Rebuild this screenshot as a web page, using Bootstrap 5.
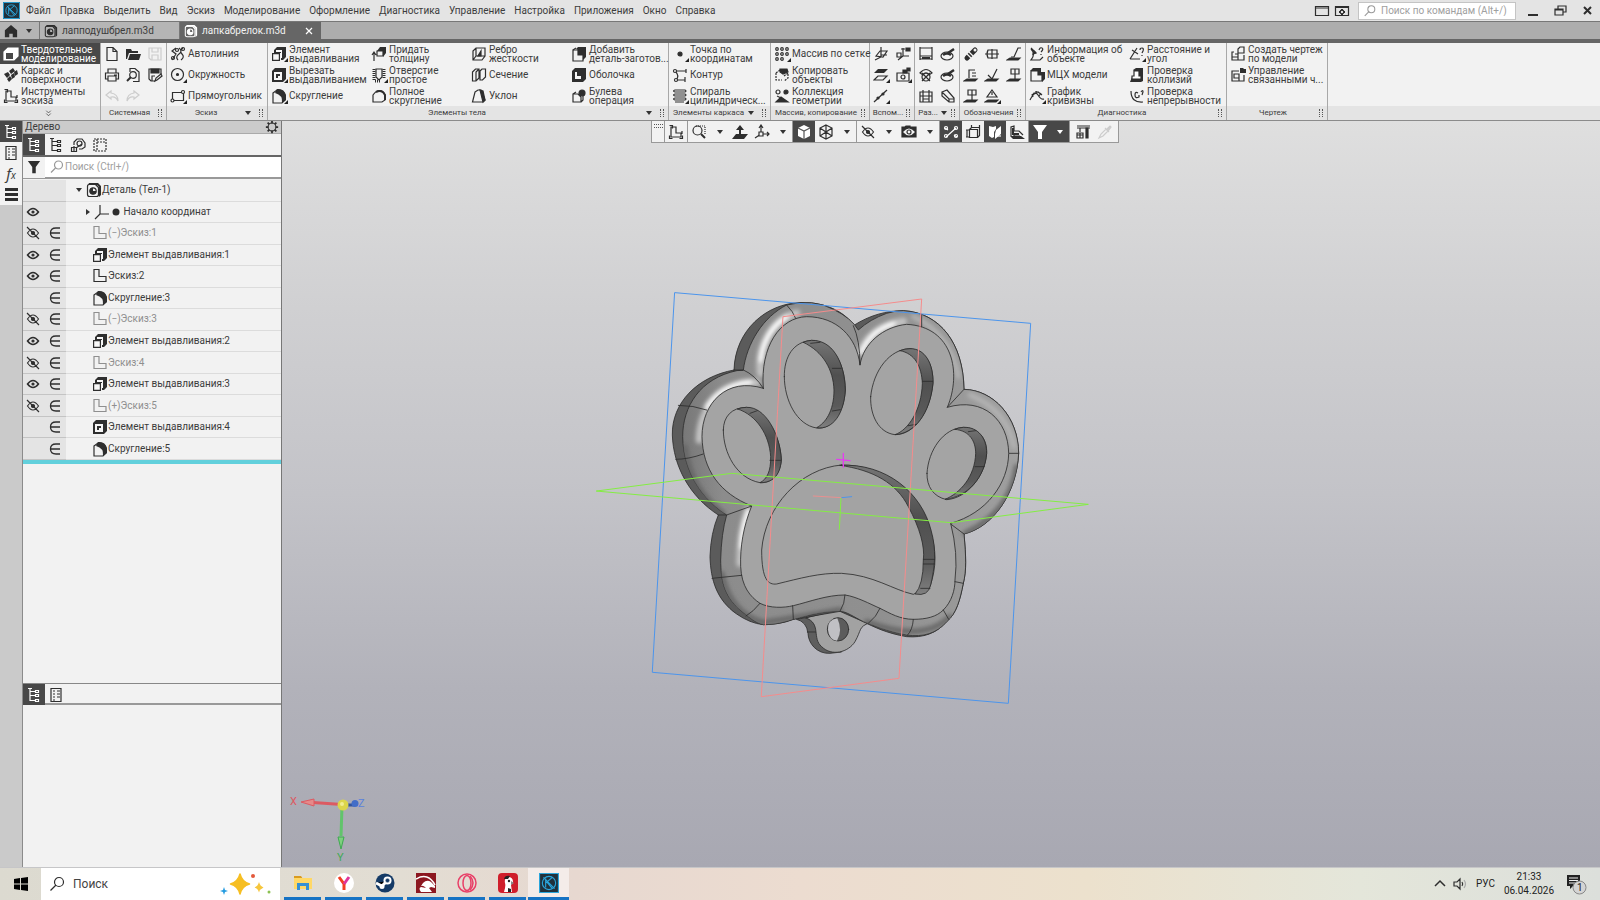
<!DOCTYPE html>
<html lang="ru">
<head>
<meta charset="utf-8">
<meta name="viewport" content="width=device-width, initial-scale=1">
<title>лапкабрелок.m3d</title>
<link href="https://cdn.jsdelivr.net/npm/bootstrap@5.3.0/dist/css/bootstrap.min.css" rel="stylesheet">
<style>
:root{--ink:#2e2e2e;--dark:#484848;--edge:#8b8b8b}
body{font-family:Roboto,"Noto Sans",sans-serif;font-size:10px;line-height:14px;color:#3c3c3c;background:#ccc}
button,input{font:inherit;color:inherit}
button{border:0;background:none;padding:0}
a{color:inherit;text-decoration:none}
svg{display:block;flex:none}
.ic{width:16px;height:16px;fill:none;stroke:currentColor;stroke-width:1.2;color:var(--ink)}
.ic.mid{width:14px;height:14px}
.ic.pale{color:#ccc}.ic.grey{color:#999}
.f{fill:currentColor}
.menubar{height:21px;background:#e4e4e4;padding-left:3px}
.menubar nav{gap:9px;padding-left:6px}
.cmdsearch{width:158px;height:18px;border:1px solid #c4c4c4;background:#fff}
.cmdsearch input,.treesearch input{border:0;outline:0;background:none;min-width:0;padding:0}
input::placeholder{color:#a0a0a0;opacity:1}
.tabbar{height:22px;background:#adadad;border-top:1px solid #777;border-bottom:4px solid #666}
.tabbar>*{border-right:1px solid #777;background:#b5b5b5}
.tab-home{width:40px}
.tab-doc{width:140px}
.tab-doc.on{width:141px;background:#666;color:#f2f2f2;border:0;margin-bottom:-4px;padding-bottom:3px}
.ribbon{height:78px;background:linear-gradient(#f2f2f2 63px,#e4e4e4 63px);border-bottom:1px solid var(--edge)}
.grp{border-right:1px solid #a8a8a8;flex:none}
.cells{display:grid;grid-template-rows:repeat(3,21px);grid-auto-flow:column;grid-auto-columns:100px}
.cells.wide{grid-auto-columns:101px}
.cells.slim{grid-auto-columns:98px}
.cells.duo{grid-auto-columns:22px}
.cells.trio{grid-template-columns:21px 22px 22px}
.cells button{display:flex;align-items:center;gap:2px;padding-left:3px;text-align:left;line-height:9px;white-space:nowrap;height:21px;position:relative}
.cells .dd::after{content:"";position:absolute;left:16px;bottom:2px;border:2px solid transparent;border-right-color:#222;border-bottom-color:#222}
.grp.modes .on{background:var(--dark);color:#fff}
.caption{width:0;min-width:100%;height:14px;font-size:8px;line-height:14px;display:flex;align-items:center;padding-right:4px}
.caption span{flex:1;text-align:center;white-space:nowrap}
.grip{width:4px;height:8px;border-left:1px dotted #555;border-right:1px dotted #555}
.gripbar{width:9px;height:4px;border-top:1px dotted #555;border-bottom:1px dotted #555}
.car{border:3px solid transparent;border-top:4px solid #333;border-bottom:0;width:0;height:0;flex:none}
.car.side{border:3px solid transparent;border-left:4px solid #333;border-right:0}
.car.lite{border-top-color:#fff}
.rail{width:22px;background:#cacaca}
.rail button{width:22px;height:21px;background:#f2f2f2;display:grid;place-items:center}
.rail .on,.sq.on{background:var(--dark)}
.on .ic{color:#fff}
.fx{font-family:"Noto Sans",sans-serif;font-size:15px;font-style:italic}
.fx small{font-size:10px}
.tree{width:260px;background:#f2f2f2;border-left:1px solid var(--edge);border-right:1px solid #777}
.tree-head{height:13px;background:#cbcbcb;border-bottom:1px solid #aaa;padding:0 2px}
.sq{width:22px;height:21px;display:grid;place-items:center}
.treesearch{height:24px;background:#fff;border-top:2px solid #666;border-bottom:2px solid #999}
.treesearch .sq{background:#f2f2f2}
.rows{height:285px;border-bottom:4px solid #62d0dc;list-style:none;margin:0;padding:1px 0 0}
.rows li{flex:1 1 0;display:flex;align-items:center;border-bottom:1px solid #dcdcdc;min-height:0}
.rows .flags{width:43px;align-self:stretch;background:#e4e4e4;display:grid;grid-template-columns:22px 21px;align-items:center;border-bottom:1px solid #c4c4c4;margin-bottom:-1px}
.rows .flags .ic{margin-left:2px}
.rows .own{grid-column:2}
.rows .name{padding-left:26px;display:flex;align-items:center;white-space:nowrap}
.rows .name.top{padding-left:10px}.rows .name.sub{padding-left:20px}
.rows .dim,.rows .dim .ic{color:#8f8f8f}
.subbar{height:22px;border-top:1px solid #888;border-bottom:2px solid #999}
.lower{height:162px}
.view{background:linear-gradient(#dfdfdf,#d0d0d2 25%,#c3c3c8 50%,#b2b2ba 76%,#a8a8b2);position:relative}
.view .scene{position:absolute;inset:0;width:100%;height:100%}
.quick{position:absolute;left:369px;top:0;height:22px;background:#f2f2f2;border:1px solid #999;border-top:0}
.quick>div{display:flex;align-items:center;border-right:1px solid #999;height:21px}
.quick>div:last-child{border:0;padding:0 2px}
.quick .cr{width:19px;height:21px;display:grid;place-items:center}
.quick .hand{width:13px;align-items:start;justify-content:center;padding-top:3px}
.quick .nar{width:18px}
.taskbar{height:33px;background:linear-gradient(90deg,#dcdad0,#e2ddd3 25%,#e7d8d0 36%,#ecdcd0 50%,#ece1cd 68%,#e4e6da 85%,#dcdfdb);border-top:1px solid #c6c6c8;color:#222}
.start{width:41px;display:grid;place-items:center}
.find{width:239px;background:#fff;font-size:12px}
.find input{border:0;outline:0;background:none;min-width:0;padding:0}
.find input::placeholder{color:#444}
.app{width:37px;height:32px;border-bottom:3px solid #1673c4;display:grid;place-items:center}
.apps{gap:4px;padding-left:4px}
.app.on{background:#f4ece9;width:41px;margin-left:-2px}
.clock{width:52px}
.systray{padding-right:11px}
</style>
</head>
<body class="vh-100 d-flex flex-column overflow-hidden">

<svg width="0" height="0" class="position-absolute" aria-hidden="true">
<symbol id="part" viewBox="0 0 16 16"><path class="f" stroke="none" d="M3 1h9l3 3v9l-2 2V5l-2-2H2z"/><path d="M1.500 4.500q0-2 2-2h6l3 3v7q0 2-2 2h-7q-2 0-2-2z"/><circle cx="7" cy="9" r="3.200"/><path class="f" stroke="none" d="M7 9V5.800A3.200 3.200 0 1 0 10.200 9z"/></symbol>
<symbol id="cube" viewBox="0 0 16 16"><path class="f" d="M1 6l4-4h10v8l-4 4H1z"/><path fill="#484848" stroke="none" d="M3 7h7v6H3z"/></symbol>
<symbol id="mesh" viewBox="0 0 16 16"><path class="f" stroke="none" d="M1 7l4-2 2 3-3 3zM6 4l4-3 2 3-4 3zM11 5l3-2 1 4-3 2zM8 8l3-2 1 4-3 2zM4 12l3-3 2 3-3 3z"/></symbol>
<symbol id="sketch" viewBox="0 0 16 16"><path d="M3 3v10h10V9H8V3zM1.500 1.500h3v3M1.500 11.500v3h3M11.500 14.500h3v-3M14 7v3"/></symbol>
<symbol id="ell" viewBox="0 0 16 16"><path d="M2 1.500h5v7h7v5H2z"/></symbol>
<symbol id="doc" viewBox="0 0 16 16"><path d="M3 1.500h6l4 4v9H3zM9 1.500v4h4"/></symbol>
<symbol id="open" viewBox="0 0 16 16"><path class="f" stroke="none" d="M1 3h5l1 2h6v2H4l-2 6H1zM5 8h11l-2 6H3z"/></symbol>
<symbol id="save" viewBox="0 0 16 16"><path d="M2 2h12v12H4l-2-2zM5 2v4h6V2M5 14v-5h6v5"/></symbol>
<symbol id="saveas" viewBox="0 0 16 16"><path d="M8 14H4l-2-2V2h12v5"/><path class="f" d="M4 2h8v4H4z"/><path d="M5 14v-5h3M8 14l1-3 5-4 1 2-5 4z"/></symbol>
<symbol id="print" viewBox="0 0 16 16"><path d="M4 6V2h8v4M4 12H1.500V6h13v6H12M4 9h8v5H4zM10 8h3"/></symbol>
<symbol id="preview" viewBox="0 0 16 16"><path d="M5 5V1.500h5L14 5v9.500H8"/><circle cx="8" cy="8" r="3.300"/><path stroke-width="2" d="M6 10l-4 4"/></symbol>
<symbol id="objs" viewBox="0 0 16 16"><path d="M4 8V5l3-3h5l3 4v4l-3 2H9"/><circle cx="9.500" cy="6.500" r="2.500"/><path d="M1.500 10.500h5v4h-5zM4 9v5M6 11l6-4"/></symbol>
<symbol id="undo" viewBox="0 0 16 16"><path d="M7 3L2 7l5 4V9q5-1 7 4 0-7-7-8z"/></symbol>
<symbol id="redo" viewBox="0 0 16 16"><path d="M9 3l5 4-5 4V9Q4 8 2 13 2 6 9 5z"/></symbol>
<symbol id="auto" viewBox="0 0 16 16"><path d="M2 14L6 8 2 5l4-3M8 14q-3-3 1-6t0-6M13 2q-4 3-1 6t-1 6"/><circle cx="13" cy="3" r="1.500"/><circle cx="3" cy="12" r="1.500"/><circle cx="7" cy="4" r="1.500"/></symbol>
<symbol id="circ" viewBox="0 0 16 16"><circle cx="7.500" cy="7.500" r="6"/><circle class="f" cx="7.500" cy="7.500" r="1"/></symbol>
<symbol id="rect" viewBox="0 0 16 16"><path d="M2.500 4.500h11v8h-11z"/><g fill="#fff"><circle cx="13" cy="4" r="1.500"/><circle cx="2.500" cy="12.500" r="1.500"/></g></symbol>
<symbol id="ext" viewBox="0 0 16 16"><path class="f" stroke="none" d="M3 4l3-3h9v10l-3 3h-2V7H3z"/><path fill="#f8f8f8" stroke="none" d="M5 4h6v8h-1V6H5z"/><path fill="#f8f8f8" d="M1.600 7.600h6.800v6.800H1.600z"/></symbol>
<symbol id="cut" viewBox="0 0 16 16"><path class="f" stroke="none" d="M1 4l3-3h11v11l-3 3H1z"/><path fill="#f6f6f6" stroke="none" d="M3 5h8v8H3z"/><path fill="none" stroke-width="2" d="M6 11V8h3"/></symbol>
<symbol id="fillet" viewBox="0 0 16 16"><path d="M2 5l4-3h3q5 2 5 6v4l-3 3H2z"/><path class="f" stroke="none" d="M6 1q7-1 9 6v5l-4 3q1-8-7-10z"/></symbol>
<symbol id="thick" viewBox="0 0 16 16"><path class="f" stroke="none" d="M6 5l3-4h6v6l-3 4V5z"/><path d="M6 5h6v5H6zM3 15V7M1 9l2-3 2 3"/></symbol>
<symbol id="hole" viewBox="0 0 16 16"><path stroke-dasharray="1 1" stroke-width="3" d="M3 2v12M13 2v10M4 14h6"/><path d="M5 2v8l3 3 3-3V2z"/></symbol>
<symbol id="fullf" viewBox="0 0 16 16"><path d="M2 7q4-6 9-4 4 2 3 9l-3 2H2z"/><path stroke-width="2" d="M5 4q6-3 9 3v5"/></symbol>
<symbol id="rib" viewBox="0 0 16 16"><path d="M2 5l3-3h9v8l-3 4H2zM5 2v8h9M5 10l-3 4"/><path class="f" d="M10 5v5H7z"/></symbol>
<symbol id="sect" viewBox="0 0 16 16"><path d="M1.500 5l3-3H8v9l-3 3H1.500zM5 14V5l3-3M9 4l2-2h3.500v8l-3 3H9z"/></symbol>
<symbol id="draft" viewBox="0 0 16 16"><path d="M4 4l3-2h3l4 10-2 2H1.500z"/><path class="f" d="M9 2l3 1 2 9-2 2z"/></symbol>
<symbol id="addp" viewBox="0 0 16 16"><path class="f" stroke="none" d="M5 3l2-2h8v10l-3 3V9H7V4z"/><path d="M2 4h5v5h5v6H2z"/><path d="M2 4l3-2"/></symbol>
<symbol id="shell" viewBox="0 0 16 16"><path class="f" stroke="none" d="M1 4l3-3h11v11l-3 3H1z"/><path fill="#f6f6f6" stroke="none" d="M4 5h6v7H4z"/><path class="f" stroke="none" d="M6 5h4v4H6z"/></symbol>
<symbol id="bool" viewBox="0 0 16 16"><path d="M2 6h5l3 3v5H2zM12 8v4l-2 2M2 6l3-2"/><circle class="f" cx="11" cy="5" r="3"/></symbol>
<symbol id="dot" viewBox="0 0 16 16"><circle class="f" cx="8" cy="8" r="2"/></symbol>
<symbol id="contour" viewBox="0 0 16 16"><path d="M14 4H3q5 5 1 9h9M14 2v4M13 10v5"/><g fill="#fff"><circle cx="3" cy="4" r="1.500"/><circle cx="4" cy="13" r="1.500"/></g></symbol>
<symbol id="spiral" viewBox="0 0 16 16"><path d="M3 4q-3-1 0-2h10q2 1 0 2zM3 8q-3-1 0-2h10q2 1 0 2zM3 12q-3-1 0-2h10q2 1 0 2zM3 14h9"/></symbol>
<symbol id="array" viewBox="0 0 16 16"><circle cx="3" cy="3" r="1.300"/><circle cx="8" cy="3" r="1.300"/><circle cx="13" cy="3" r="1.300"/><circle cx="3" cy="8" r="1.300"/><circle cx="8" cy="8" r="1.300"/><circle cx="13" cy="8" r="1.300"/><circle cx="3" cy="13" r="1.300"/><circle cx="8" cy="13" r="1.300"/></symbol>
<symbol id="copy" viewBox="0 0 16 16"><path stroke-dasharray="2 1" d="M2 6l4-3M2 6v7h6M10 9l4-3v5l-4 3"/><path class="f" d="M6 2h7l1 3-5 2-3-2z"/></symbol>
<symbol id="coll" viewBox="0 0 16 16"><circle cx="4" cy="4" r="2"/><circle class="f" cx="12" cy="4" r="2"/><path class="f" d="M2 14l5-5 7 5z"/><path d="M3 8l4 2"/></symbol>
<symbol id="plane" viewBox="0 0 16 16"><path d="M3 10l4-5h7l-4 6zM8 1v10l-6 3M8 9h6"/></symbol>
<symbol id="lcs" viewBox="0 0 16 16"><path d="M8 2v8h6M8 10l-5 4M2 7h4v4H2zM6 3h4"/><path class="f" d="M11 2h4v3h-4z"/></symbol>
<symbol id="planes" viewBox="0 0 16 16"><path class="f" stroke="none" d="M1 6l4-4h10l-4 4z"/><path d="M1 13l4-4h9l-4 4z"/></symbol>
<symbol id="cam" viewBox="0 0 16 16"><path d="M2 6h12v8H2z"/><circle cx="8" cy="10" r="2"/><path class="f" d="M8 3h4v3H8zM12 1h3v3h-3z"/></symbol>
<symbol id="axis" viewBox="0 0 16 16"><path d="M1 14L14 2"/><circle class="f" cx="5" cy="10" r="1"/><circle class="f" cx="10" cy="6" r="1"/></symbol>
<symbol id="dim" viewBox="0 0 16 16"><path d="M2 1v13M14 1v13M2 2h12v8H2M2 13h12"/><path stroke-width="2" d="M4 12h8"/></symbol>
<symbol id="disc" viewBox="0 0 16 16"><ellipse cx="7" cy="10" rx="6" ry="4"/><path stroke-width="2.500" d="M3 9q4-3 8 0M8 7l6-4"/></symbol>
<symbol id="rad" viewBox="0 0 16 16"><path d="M2 6q6-7 12 0l-3 2q-3-4-6 0z"/><circle cx="8" cy="10" r="4"/><path d="M4 14l8-8M4 6l8 8"/></symbol>
<symbol id="grid3" viewBox="0 0 16 16"><path d="M2 4h12v10H2zM5 2v12M11 2v12M2 8h12M5 11h6"/></symbol>
<symbol id="prism" viewBox="0 0 16 16"><path d="M2 4l5-2 7 8v4H9L2 8zM2 4l7 7h5M9 11v3"/></symbol>
<symbol id="thread" viewBox="0 0 16 16"><path stroke-width="5" stroke-linecap="round" d="M4 12l8-8"/><path stroke="#f2f2f2" d="M4 8l4 4M6 6l4 4"/><circle cx="12" cy="4" r="1.500" fill="#f2f2f2" stroke="none"/></symbol>
<symbol id="axc" viewBox="0 0 16 16"><path d="M4 4h9v8H4q-2-4 0-8zM1 8h14M8 3v10"/></symbol>
<symbol id="rough" viewBox="0 0 16 16"><path d="M4 8l4 4 5-10"/><path class="f" d="M1 14l3-2h10l-2 2z"/></symbol>
<symbol id="base" viewBox="0 0 16 16"><path d="M6 11V3h6M9 6h4M9 9h4"/><path class="f" d="M1 14l3-2h10l-2 2z"/></symbol>
<symbol id="lead" viewBox="0 0 16 16"><path d="M5 11h3l4-9h3"/><path class="f" d="M1 14l3-2h10l-2 2z"/></symbol>
<symbol id="note" viewBox="0 0 16 16"><path d="M5 2h8v5H5zM9 2v10"/><path class="f" d="M1 14l3-2h10l-2 2z"/></symbol>
<symbol id="warn" viewBox="0 0 16 16"><path d="M8 2l5 7H3zM8 4v3"/><path class="f" d="M1 14l3-2h10l-2 2z"/></symbol>
<symbol id="info" viewBox="0 0 16 16"><path d="M2 3q5 5 0 11h9l3-3M10 4q1-3 3-2t-1 4M12 8v1M2 2l5 5"/><path class="f" d="M5 5l2 2-3 1z"/></symbol>
<symbol id="mass" viewBox="0 0 16 16"><path class="f" stroke="none" d="M1 4l3-3h8v4h4v7l-3 3V8H9V4z"/><path d="M2 4h7v4h4v6H2z"/></symbol>
<symbol id="curv" viewBox="0 0 16 16"><path d="M1 12q5-10 8-5t6 4M3 8l2-3 4-1 4 3M4 9L3 6M7 6V3M10 8l2-3"/></symbol>
<symbol id="dist" viewBox="0 0 16 16"><path d="M1 13L8 2M1 13h10M3 4l6 4M11 4q0-2 2-2t1 3l-1 2M13 9v1"/></symbol>
<symbol id="colli" viewBox="0 0 16 16"><path class="f" stroke="none" d="M4 3l3-2h7v13l-2 1H1l2-5h2V4z"/><path fill="#fff" d="M5 4h5v5h2v3H3V9h2z"/></symbol>
<symbol id="cont" viewBox="0 0 16 16"><path d="M2 3q0 12 12 11M9 5Q6 3 6 7t4 2V7M12 4q2-3 2 0l-1 3"/></symbol>
<symbol id="draw" viewBox="0 0 16 16"><path d="M4 6H2v8h12V9M2 11h6v3M5 8h3v3M8 7V3l2-2h4v6H8z"/></symbol>
<symbol id="links" viewBox="0 0 16 16"><path d="M9 4H2v10h12V8M4 7h5v4H4zM9 11v3"/><path class="f" stroke="none" d="M10 1h3l1 1h2v4h-6z"/></symbol>
<symbol id="tree" viewBox="0 0 16 16"><path d="M4 1v13M4 4.500h5M4 8.500h5M4 13.500h5M2 1.500h4M9.500 3.500h3v2h-3zM9.500 7.500h3v2h-3zM9.500 12.500h3v2h-3z"/></symbol>
<symbol id="list" viewBox="0 0 16 16"><path d="M3 1.500h10v13H3zM5 4h2M9 4h3M5 7h2M9 7h3M5 10h2M9 10h3M5 13h2"/></symbol>
<symbol id="bars" viewBox="0 0 16 16"><path class="f" stroke="none" d="M2 1h13v3H2zM2 6h13v3H2zM2 11h13v3H2z"/></symbol>
<symbol id="gear" viewBox="0 0 16 16"><circle cx="8" cy="8" r="4.500"/><path stroke-width="2" d="M8 1v3M8 12v3M1 8h3M12 8h3M3 3l2 2M11 11l2 2M13 3l-2 2M5 11l-2 2"/></symbol>
<symbol id="zones" viewBox="0 0 16 16"><path stroke-dasharray="2 1" d="M2 2h12v12H2zM5 2v12M5 5h9"/></symbol>
<symbol id="funnel" viewBox="0 0 16 16"><path class="f" stroke="none" d="M1 1h14L10 8v7H6V8z"/></symbol>
<symbol id="mag" viewBox="0 0 16 16"><circle cx="9.500" cy="6" r="4"/><path d="M6.500 9L2 13.500"/></symbol>
<symbol id="eye" viewBox="0 0 16 16"><path stroke-width="1.500" d="M2.500 8q5.500-7 11 0-5.500 7-11 0z"/><circle class="f" cx="8" cy="8" r="1"/></symbol>
<symbol id="eyeoff" viewBox="0 0 16 16"><path d="M2.500 8q5.500-8 11 0-5.500 8-11 0zM2 2l12 12"/><circle class="f" cx="8" cy="8" r="1.500"/></symbol>
<symbol id="in" viewBox="0 0 16 16"><path stroke-width="1.300" d="M13 3H9q-5.500 0-5.500 5t5.500 5h4M4 8h9"/></symbol>
<symbol id="csys" viewBox="0 0 16 16"><path d="M6 1v9h9M6 10l-5 5"/></symbol>
<symbol id="home" viewBox="0 0 16 16"><path class="f" stroke="none" d="M1 7l7-6 7 6v8h-5v-4H6v4H1z"/></symbol>
<symbol id="win" viewBox="0 0 16 16"><path d="M1.500 3.500h13v9h-13zM1.500 5h13"/></symbol>
<symbol id="wineye" viewBox="0 0 16 16"><path d="M1.500 3.500h13v9h-13z"/><path stroke-width="2" d="M1.500 4h13M8 6v6M5 9h6"/><circle cx="8" cy="9" r="1.800" fill="#e4e4e4"/></symbol>
<symbol id="box" viewBox="0 0 16 16"><path d="M8 1l6 3v8l-6 3-6-3V4z" fill="#fff" stroke="none"/><path stroke="#555" d="M2 4l6 3 6-3M8 7v8"/></symbol>
<symbol id="wire" viewBox="0 0 16 16"><path d="M8 1l6 3v8l-6 3-6-3V4zM2 4l6 4 6-4M8 8v7M8 1v7l-6 4M8 8l6 4"/></symbol>
<symbol id="zoomer" viewBox="0 0 16 16"><circle cx="6.500" cy="6.500" r="4.500"/><path stroke-width="2" d="M10 10l4 4"/><path stroke-dasharray="1 1" d="M5 2h9v8"/></symbol>
<symbol id="normal" viewBox="0 0 16 16"><path class="f" stroke="none" d="M0 15l4-5h3V6H4l4-5 4 5H9v4h7l-4 5z"/></symbol>
<symbol id="orient" viewBox="0 0 16 16"><path d="M7 10V2M7 10h8M7 10l-6 4M5 4l2-3 2 3M13 8l2 2-2 2"/><path fill="#f2f2f2" d="M5 8h4v4H5z"/></symbol>
<symbol id="cameye" viewBox="0 0 16 16"><path class="f" d="M1 3h3l1-1h4v1h6v10H1z"/><path fill="#f2f2f2" stroke="none" d="M2 8q6-7 12 0-6 7-12 0z"/><circle cx="8" cy="8" r="2"/></symbol>
<symbol id="constr" viewBox="0 0 16 16"><path d="M3 13l10-9M2 4l3 2M11 11l3 2"/><circle cx="3" cy="4" r="1.500"/><circle cx="13" cy="4" r="1.500"/><circle cx="13" cy="12" r="1.500"/><circle cx="3" cy="12" r="1.500"/></symbol>
<symbol id="planar" viewBox="0 0 16 16"><path d="M4.500 5.500h8v8h-8zM4.500 5.500l2-2h8v8l-2 2M1 6h3M1 13h3M2 6v7M6.500 1v3M14.500 1v3"/></symbol>
<symbol id="shade" viewBox="0 0 16 16"><path class="f" stroke="none" d="M2 2l4 1 3-1v3L7 8v5l-2 1-3-2zM9 6l5-4v8l-6 5v-5z"/><path d="M10 12h4"/></symbol>
<symbol id="layers" viewBox="0 0 16 16"><path class="f" stroke="none" d="M1 12h11l4 3H4z"/><path d="M2 12V3l3-1v5h5l4 4M5 9v3h6"/><path stroke-width="2" d="M4 4v6h6"/></symbol>
<symbol id="caliper" viewBox="0 0 16 16"><path d="M2 2h13M2 4h13M5 4v4M2 9h6v5H2zM5 9v5M2 11h6"/><path class="f" d="M11 4h2v10h-2z"/></symbol>
<symbol id="pipette" viewBox="0 0 16 16"><path d="M2 14l2-4 5-5 2 2-5 5zM8 4l4 4"/><path class="f" d="M10 5l3-3 1 1-3 4z"/></symbol>
<symbol id="more" viewBox="0 0 16 16"><path d="M4 3l4 4 4-4M4 8l4 4 4-4"/></symbol>
<symbol id="klogo" viewBox="0 0 18 18"><path fill="#20313c" d="M0 0h18v18H0z"/><g fill="none" stroke="#2aa5dc"><path d="M.5.500h17v17H.5z"/><circle cx="9" cy="9" r="6"/><path d="M6 5v8M6 9l6-5M7 8l5 6M4 4l10 10"/></g></symbol>
</svg>

<header class="menubar d-flex align-items-center flex-shrink-0">
  <svg width="17" height="17"><use href="#klogo"/></svg>
  <nav class="d-flex" aria-label="Меню"><a href="#">Файл</a><a href="#">Правка</a><a href="#">Выделить</a><a href="#">Вид</a><a href="#">Эскиз</a><a href="#">Моделирование</a><a href="#">Оформление</a><a href="#">Диагностика</a><a href="#">Управление</a><a href="#">Настройка</a><a href="#">Приложения</a><a href="#">Окно</a><a href="#">Справка</a></nav>
  <button class="ms-auto" aria-label="Окно"><svg class="ic"><use href="#win"/></svg></button>
  <button class="ms-1 me-1" aria-label="Вид окна"><svg class="ic"><use href="#wineye"/></svg></button>
  <label class="cmdsearch d-flex align-items-center gap-1 ms-1 ps-1"><svg class="ic grey mid"><use href="#mag"/></svg><input class="flex-fill" placeholder="Поиск по командам (Alt+/)" aria-label="Поиск по командам"></label>
  <div class="d-flex gap-2 ps-2 pe-1">
    <button aria-label="Свернуть"><svg class="ic" viewBox="0 0 16 16"><path stroke-width="2" d="M4 12h10"/></svg></button>
    <button class="mx-1" aria-label="Восстановить"><svg class="ic" viewBox="0 0 16 16"><path d="M3 6h8v6H3zM6 6V3h8v6h-3M3 7h8"/></svg></button>
    <button aria-label="Закрыть"><svg class="ic" viewBox="0 0 16 16"><path stroke-width="2" d="M4 4l7 7M11 4l-7 7"/></svg></button>
  </div>
</header>

<div class="tabbar d-flex flex-shrink-0">
  <button class="tab-home d-flex align-items-center gap-2 ps-1" aria-label="Главная"><svg class="ic mid"><use href="#home"/></svg><i class="car"></i></button>
  <button class="tab-doc d-flex align-items-center gap-1 ps-1"><svg class="ic mid"><use href="#part"/></svg>лапподушбрел.m3d</button>
  <button class="tab-doc on d-flex align-items-center gap-1 ps-1"><svg class="ic mid"><use href="#part"/></svg>лапкабрелок.m3d<svg class="ic ms-auto me-1" viewBox="0 0 16 16"><path d="M5 5l6 6M11 5l-6 6"/></svg></button>
</div>

<section class="ribbon d-flex flex-shrink-0">
  <div class="grp modes"><div class="cells">
    <button class="on"><svg class="ic"><use href="#cube"/></svg><span>Твердотельное<br>моделирование</span></button>
    <button><svg class="ic"><use href="#mesh"/></svg><span>Каркас и<br>поверхности</span></button>
    <button><svg class="ic"><use href="#sketch"/></svg><span>Инструменты<br>эскиза</span></button></div>
    <div class="caption justify-content-center"><svg class="ic" style="width:9px;height:9px"><use href="#more"/></svg></div></div>
  <div class="grp"><div class="cells trio">
    <button aria-label="Создать"><svg class="ic"><use href="#doc"/></svg></button><button aria-label="Печать"><svg class="ic"><use href="#print"/></svg></button><button aria-label="Отменить"><svg class="ic pale"><use href="#undo"/></svg></button>
    <button aria-label="Открыть"><svg class="ic"><use href="#open"/></svg></button><button aria-label="Просмотр"><svg class="ic"><use href="#preview"/></svg></button><button aria-label="Повторить"><svg class="ic pale"><use href="#redo"/></svg></button>
    <button aria-label="Сохранить"><svg class="ic pale"><use href="#save"/></svg></button><button aria-label="Сохранить как"><svg class="ic"><use href="#saveas"/></svg></button></div>
    <div class="caption"><span>Системная</span><i class="grip"></i></div></div>
  <div class="grp"><div class="cells">
    <button><svg class="ic"><use href="#auto"/></svg>Автолиния</button>
    <button class="dd"><svg class="ic"><use href="#circ"/></svg>Окружность</button>
    <button class="dd"><svg class="ic"><use href="#rect"/></svg>Прямоугольник</button></div>
    <div class="caption"><span>Эскиз</span><i class="car me-2"></i><i class="grip"></i></div></div>
  <div class="grp"><div class="cells">
    <button class="dd"><svg class="ic"><use href="#ext"/></svg><span>Элемент<br>выдавливания</span></button>
    <button class="dd"><svg class="ic"><use href="#cut"/></svg><span>Вырезать<br>выдавливанием</span></button>
    <button class="dd"><svg class="ic"><use href="#fillet"/></svg>Скругление</button>
    <button><svg class="ic"><use href="#thick"/></svg><span>Придать<br>толщину</span></button>
    <button class="dd"><svg class="ic"><use href="#hole"/></svg><span>Отверстие<br>простое</span></button>
    <button><svg class="ic"><use href="#fullf"/></svg><span>Полное<br>скругление</span></button>
    <button><svg class="ic"><use href="#rib"/></svg><span>Ребро<br>жесткости</span></button>
    <button><svg class="ic"><use href="#sect"/></svg>Сечение</button>
    <button><svg class="ic"><use href="#draft"/></svg>Уклон</button>
    <button><svg class="ic"><use href="#addp"/></svg><span>Добавить<br>деталь-заготов...</span></button>
    <button><svg class="ic"><use href="#shell"/></svg>Оболочка</button>
    <button><svg class="ic"><use href="#bool"/></svg><span>Булева<br>операция</span></button></div>
    <div class="caption"><span>Элементы тела</span><i class="car me-2"></i><i class="grip"></i></div></div>
  <div class="grp"><div class="cells wide">
    <button class="dd"><svg class="ic"><use href="#dot"/></svg><span>Точка по<br>координатам</span></button>
    <button><svg class="ic"><use href="#contour"/></svg>Контур</button>
    <button class="dd"><svg class="ic"><use href="#spiral"/></svg><span>Спираль<br>цилиндрическ...</span></button></div>
    <div class="caption"><span>Элементы каркаса</span><i class="car me-2"></i><i class="grip"></i></div></div>
  <div class="grp"><div class="cells slim">
    <button class="dd"><svg class="ic"><use href="#array"/></svg>Массив по сетке</button>
    <button><svg class="ic"><use href="#copy"/></svg><span>Копировать<br>объекты</span></button>
    <button><svg class="ic"><use href="#coll"/></svg><span>Коллекция<br>геометрии</span></button></div>
    <div class="caption"><span>Массив, копирование</span><i class="grip"></i></div></div>
  <div class="grp"><div class="cells duo">
    <button aria-label="Плоскость"><svg class="ic"><use href="#plane"/></svg></button><button class="dd" aria-label="Смещенная плоскость"><svg class="ic"><use href="#planes"/></svg></button><button class="dd" aria-label="Ось"><svg class="ic"><use href="#axis"/></svg></button>
    <button aria-label="ЛСК"><svg class="ic"><use href="#lcs"/></svg></button><button class="dd" aria-label="Вид"><svg class="ic"><use href="#cam"/></svg></button></div>
    <div class="caption"><span>Вспом...</span><i class="grip"></i></div></div>
  <div class="grp"><div class="cells duo">
    <button aria-label="Размер"><svg class="ic"><use href="#dim"/></svg></button><button aria-label="Радиус"><svg class="ic"><use href="#rad"/></svg></button><button aria-label="Сетка"><svg class="ic"><use href="#grid3"/></svg></button>
    <button aria-label="Диаметр"><svg class="ic"><use href="#disc"/></svg></button><button aria-label="Диаметр 2"><svg class="ic"><use href="#disc"/></svg></button><button aria-label="Призма"><svg class="ic"><use href="#prism"/></svg></button></div>
    <div class="caption"><span>Раз...</span><i class="car me-1"></i><i class="grip"></i></div></div>
  <div class="grp"><div class="cells trio">
    <button aria-label="Резьба"><svg class="ic"><use href="#thread"/></svg></button><button aria-label="База"><svg class="ic"><use href="#base"/></svg></button><button aria-label="Марка"><svg class="ic"><use href="#note"/></svg></button>
    <button aria-label="Осевая"><svg class="ic"><use href="#axc"/></svg></button><button aria-label="Шероховатость"><svg class="ic"><use href="#rough"/></svg></button><button class="dd" aria-label="Допуск"><svg class="ic"><use href="#warn"/></svg></button>
    <button aria-label="Выноска"><svg class="ic"><use href="#lead"/></svg></button><button aria-label="Клеймо"><svg class="ic"><use href="#note"/></svg></button></div>
    <div class="caption"><span>Обозначения</span><i class="grip"></i></div></div>
  <div class="grp"><div class="cells">
    <button><svg class="ic"><use href="#info"/></svg><span>Информация об<br>объекте</span></button>
    <button><svg class="ic"><use href="#mass"/></svg>МЦХ модели</button>
    <button class="dd"><svg class="ic"><use href="#curv"/></svg><span>График<br>кривизны</span></button>
    <button class="dd"><svg class="ic"><use href="#dist"/></svg><span>Расстояние и<br>угол</span></button>
    <button><svg class="ic"><use href="#colli"/></svg><span>Проверка<br>коллизий</span></button>
    <button><svg class="ic"><use href="#cont"/></svg><span>Проверка<br>непрерывности</span></button></div>
    <div class="caption"><span>Диагностика</span><i class="grip"></i></div></div>
  <div class="grp"><div class="cells">
    <button><svg class="ic"><use href="#draw"/></svg><span>Создать чертеж<br>по модели</span></button>
    <button><svg class="ic"><use href="#links"/></svg><span>Управление<br>связанными ч...</span></button></div>
    <div class="caption"><span>Чертеж</span><i class="grip"></i></div></div>
</section>

<main class="d-flex flex-fill" style="min-height:0">
  <div class="rail flex-shrink-0">
    <button class="on" aria-label="Дерево"><svg class="ic"><use href="#tree"/></svg></button>
    <button aria-label="Параметры"><svg class="ic"><use href="#list"/></svg></button>
    <button aria-label="Переменные"><span class="fx">f<small>x</small></span></button>
    <button aria-label="Слои"><svg class="ic"><use href="#bars"/></svg></button>
  </div>
  <aside class="tree d-flex flex-column flex-shrink-0">
    <div class="tree-head d-flex align-items-center justify-content-between"><span>Дерево</span><svg class="ic mid"><use href="#gear"/></svg></div>
    <div class="d-flex"><button class="sq on" aria-label="Структура"><svg class="ic"><use href="#tree"/></svg></button><button class="sq" aria-label="Дерево"><svg class="ic"><use href="#tree"/></svg></button><button class="sq" aria-label="Объекты"><svg class="ic"><use href="#objs"/></svg></button><button class="sq" aria-label="Зоны"><svg class="ic"><use href="#zones"/></svg></button></div>
    <label class="treesearch d-flex align-items-center"><span class="sq"><svg class="ic mid"><use href="#funnel"/></svg></span><svg class="ic grey ms-1"><use href="#mag"/></svg><input class="flex-fill" placeholder="Поиск (Ctrl+/)" aria-label="Поиск"></label>
    <ul class="rows d-flex flex-column">
      <li><span class="flags"></span><span class="name top"><i class="car me-1"></i><svg class="ic"><use href="#part"/></svg>Деталь (Тел-1)</span></li>
      <li><span class="flags"><svg class="ic"><use href="#eye"/></svg></span><span class="name sub"><i class="car side me-1"></i><svg class="ic"><use href="#csys"/></svg><svg width="11" height="8"><circle cx="6" cy="4" r="3.500" fill="#2e2e2e"/></svg>&nbsp;Начало координат</span></li>
      <li><span class="flags"><svg class="ic"><use href="#eyeoff"/></svg><svg class="ic own"><use href="#in"/></svg></span><span class="name dim"><svg class="ic"><use href="#ell"/></svg>(−)Эскиз:1</span></li>
      <li><span class="flags"><svg class="ic"><use href="#eye"/></svg><svg class="ic own"><use href="#in"/></svg></span><span class="name"><svg class="ic"><use href="#ext"/></svg>Элемент выдавливания:1</span></li>
      <li><span class="flags"><svg class="ic"><use href="#eye"/></svg><svg class="ic own"><use href="#in"/></svg></span><span class="name"><svg class="ic"><use href="#ell"/></svg>Эскиз:2</span></li>
      <li><span class="flags"><svg class="ic own"><use href="#in"/></svg></span><span class="name"><svg class="ic"><use href="#fillet"/></svg>Скругление:3</span></li>
      <li><span class="flags"><svg class="ic"><use href="#eyeoff"/></svg><svg class="ic own"><use href="#in"/></svg></span><span class="name dim"><svg class="ic"><use href="#ell"/></svg>(−)Эскиз:3</span></li>
      <li><span class="flags"><svg class="ic"><use href="#eye"/></svg><svg class="ic own"><use href="#in"/></svg></span><span class="name"><svg class="ic"><use href="#ext"/></svg>Элемент выдавливания:2</span></li>
      <li><span class="flags"><svg class="ic"><use href="#eyeoff"/></svg><svg class="ic own"><use href="#in"/></svg></span><span class="name dim"><svg class="ic"><use href="#ell"/></svg>Эскиз:4</span></li>
      <li><span class="flags"><svg class="ic"><use href="#eye"/></svg><svg class="ic own"><use href="#in"/></svg></span><span class="name"><svg class="ic"><use href="#ext"/></svg>Элемент выдавливания:3</span></li>
      <li><span class="flags"><svg class="ic"><use href="#eyeoff"/></svg><svg class="ic own"><use href="#in"/></svg></span><span class="name dim"><svg class="ic"><use href="#ell"/></svg>(+)Эскиз:5</span></li>
      <li><span class="flags"><svg class="ic own"><use href="#in"/></svg></span><span class="name"><svg class="ic"><use href="#cut"/></svg>Элемент выдавливания:4</span></li>
      <li><span class="flags"><svg class="ic own"><use href="#in"/></svg></span><span class="name"><svg class="ic"><use href="#fillet"/></svg>Скругление:5</span></li>
    </ul>
    <div class="subbar d-flex mt-auto"><button class="sq on" aria-label="Дерево"><svg class="ic"><use href="#tree"/></svg></button><button class="sq" aria-label="Список"><svg class="ic"><use href="#list"/></svg></button></div>
    <div class="lower"></div>
  </aside>

  <section class="view flex-fill overflow-hidden">
    <svg class="scene" viewBox="282 121 1318 746" preserveAspectRatio="xMidYMid slice" role="img" aria-label="Модель: лапка">
      <defs>
        <linearGradient id="bev" x1="0" x2="1"><stop offset="0" stop-color="#787878"/><stop offset=".12" stop-color="#8c8c8c"/><stop offset=".6" stop-color="#909090"/><stop offset="1" stop-color="#a0a0a0"/></linearGradient>
        <linearGradient id="wall" x1="0" x2="0" y1="0" y2="1"><stop offset="0" stop-color="#757575"/><stop offset=".4" stop-color="#505050"/><stop offset=".75" stop-color="#5a5a5a"/><stop offset="1" stop-color="#808080"/></linearGradient>
        <filter id="soft" x="-20%" y="-20%" width="140%" height="140%"><feGaussianBlur stdDeviation="6"/></filter>
        <path id="bevel" d="M310 270C320 190 370 110 440 75Q520 55 580 88Q635 115 655 150Q690 118 740 100Q765 92 790 92C900 98 970 190 972 328C1060 330 1135 410 1136 520C1130 640 1060 740 972 762C978 830 980 870 970 910C960 960 950 1000 920 1025C890 1060 850 1072 800 1065C740 1055 700 1035 670 1025C640 1010 620 995 600 994C550 994 510 1005 460 1018C420 1032 390 1034 370 1034C345 1030 320 1005 300 990C250 945 243 900 242 840Q244 760 260 705C190 660 130 580 128 470C128 380 180 295 290 272Z"/>
        <clipPath id="bclip"><use href="#bevel"/></clipPath>
      </defs>
      <g transform="translate(640 280) scale(.33333)" stroke-linejoin="round" stroke-linecap="round">
        <g stroke="#2c2c2c" stroke-width="2.500" fill="none">
          <path fill="#5e5e5e" d="M470 1018Q500 1025 504 1060C505 1090 530 1122 570 1120L605 1116 600 1000Z"/>
          <path d="M502 1056h30"/>
          <path fill="#a2a2a2" d="M498 1014C545 1030 515 1075 545 1100C575 1130 625 1117 645 1085C665 1050 655 1040 690 1028L600 990Z"/>
          <ellipse cx="594" cy="1048" rx="32" ry="35" fill="#5c5c5c"/><path fill="#c0c0c4" stroke="none" d="M592 1015q-30 4-28 34 3 30 27 33 18-30 1-67z"/>
          <path fill="#5b5b5b" d="M282 270C285 150 380 70 480 68C560 65 620 100 640 137C690 105 740 92 790 92C900 98 970 190 972 328C1060 330 1135 410 1136 520C1130 640 1060 740 972 762C978 830 980 870 970 910C960 960 950 1000 920 1025C890 1060 850 1074 800 1070C740 1060 700 1040 670 1025L600 994L460 1018Q420 1034 370 1034Q330 1030 290 1002C230 960 212 900 210 830Q212 760 235 705C150 650 100 560 97 465C95 370 170 290 282 270Z"/>
          <use href="#bevel" fill="url(#bev)"/>
        </g>
        <g clip-path="url(#bclip)" fill="none" filter="url(#soft)">
          <path stroke="#c4c4c4" stroke-width="22" d="M178 480C180 380 250 305 350 308M362 280C350 200 400 115 470 100M660 220Q690 140 790 124M300 850Q300 760 325 690"/>
          <path stroke="#fff" stroke-width="14" d="M200 380Q240 315 330 306M363 240Q375 150 440 112M667 215Q695 150 760 132M306 800Q305 750 326 695"/>
          <path stroke="#b5b5b5" stroke-width="14" d="M820 110Q930 160 955 290M990 345Q1100 390 1122 500"/>
          <path stroke="#666" stroke-width="16" d="M245 880Q270 1000 370 1028Q460 1015 600 990M680 1025Q850 1090 930 1010M975 760Q1110 700 1130 560M135 500Q150 630 250 700"/>
        </g>
        <g stroke="#2c2c2c" stroke-width="2.500" fill="none">
          <path fill="#a4a4a4" d="M370 325C260 290 186 370 186 470C188 570 240 640 335 678C310 740 300 800 302 860C305 920 330 950 360 970C390 985 430 984 460 977C510 965 560 945 615 945C650 950 690 972 720 985C750 1000 780 1018 820 1018C860 1018 890 1010 910 990C935 965 945 930 945 900Q955 820 932 730C1040 700 1105 610 1106 520C1105 420 1030 350 922 382C965 280 940 140 800 133C730 140 670 190 660 255C650 170 590 110 500 110C420 112 360 200 370 325Z"/>
          <path d="M370 325Q345 285 310 270H282M660 255Q660 180 640 137M922 382L972 328M932 732L972 762M335 678L260 705H235M440 75Q460 95 467 115M845 105V140M115 376Q160 376 200 390M107 538Q145 538 190 522M1108 520H1136M216 895L305 886M318 1008Q340 995 360 970M458 977L460 1018M615 945Q615 970 600 994M720 985Q710 1010 685 1030M820 1018Q818 1050 802 1066M910 990L926 1018M945 905L970 910"/>
          <path d="M433 290C432 230 460 185 515 181C580 185 616 255 616 330C612 405 570 450 530 444C470 435 433 360 433 290Z"/>
          <path fill="url(#wall)" d="M490 187C550 215 580 270 582 330C582 395 555 430 530 443C580 450 612 400 616 330C613 240 575 180 515 181Q500 182 490 187Z"/>
          <path d="M250 450C250 410 275 382 320 382C380 390 422 470 424 540C420 590 390 610 360 608C290 595 250 520 250 450Z"/>
          <path fill="url(#wall)" d="M293 387C350 405 388 465 392 530C393 575 380 598 360 608C395 608 420 590 424 540C420 460 375 380 320 382Q305 382 293 387Z"/>
          <path d="M692 350C700 270 750 207 810 206C860 212 880 255 879 310C870 400 820 465 765 464C715 458 690 405 692 350Z"/>
          <path fill="url(#wall)" d="M780 212C825 220 845 260 847 310C845 390 805 450 765 464C825 460 870 400 879 310C880 250 855 205 810 206Q795 206 780 212Z"/>
          <path d="M861 580C865 510 910 445 970 442C1020 444 1042 480 1040 520C1035 590 980 655 920 659C880 650 860 620 861 580Z"/>
          <path fill="url(#wall)" d="M945 448C990 452 1007 485 1007 520C1005 590 960 640 915 658C985 650 1035 590 1040 520C1040 475 1015 440 970 442Q955 443 945 448Z"/>
          <path d="M577 265h26M577 393l24-4M848 304h30M805 437l24-4M1005 560h28M985 455l22-3M390 541h32M512 190l28-3M330 400l22-8"/>
          <path fill="#a3a3a3" d="M605 555C480 565 375 680 365 810C365 900 385 915 410 912C480 895 540 878 605 880C700 885 760 930 820 943L870 920C890 860 890 810 870 750C840 630 730 555 605 555Z"/>
          <path fill="url(#wall)" d="M600 556C700 570 770 610 805 680C840 745 855 800 850 840Q850 915 825 942Q865 950 872 915C885 860 890 810 873 750C845 640 740 548 600 556Z"/>
          <path d="M850 838h34M850 852h34M842 925h28"/>
        </g>
        <g fill="none" stroke-width="3">
          <path stroke="#4b95ec" d="M105 38L1172 130L1105 1270L38 1177Z"/>
          <path stroke="#f58c8c" d="M430 110L845 57L777 1195L365 1250Z"/>
          <path stroke="#84ee42" d="M-130 633L275 580L1345 673L935 728Z"/>
          <path stroke="#e99090" d="M520 648L605 653"/><path stroke="#4b95ec" d="M605 653L635 650"/><path stroke="#84ee42" d="M603 655L598 748"/>
          <path stroke="#e53cf0" stroke-width="4" d="M590 538L630 542M610 520V562"/>
        </g>
      </g>
      <g font-size="11" stroke-width="3">
        <path stroke="#dc5a62" d="M342 804.500L313 802.500"/><path fill="#e58a8a" stroke="#dc5a62" stroke-width="1" d="M301 802l13-3v7z"/>
        <path stroke="#62c46c" d="M342 806L341 836"/><path fill="#7ed07e" stroke="#3eaa50" stroke-width="1" d="M338 837h6l-3 12z"/>
        <path stroke="#33549c" d="M343 805h12"/><circle cx="355" cy="803.500" r="3.500" fill="#426dc8"/>
        <circle cx="343" cy="805" r="5.500" fill="#dcd64a"/><circle cx="342" cy="804" r="2" fill="#f0ed92"/>
        <text x="290" y="805" fill="#dc5a62">X</text><text x="358" y="807" fill="#5a82dc">Z</text><text x="337" y="861" fill="#42a953">Y</text>
      </g>
    </svg>
    <div class="quick d-flex">
      <div class="hand"><i class="gripbar"></i></div>
      <div><button class="sq" aria-label="Эскиз"><svg class="ic"><use href="#sketch"/></svg></button></div>
      <div><button class="sq" aria-label="Масштаб"><svg class="ic"><use href="#zoomer"/></svg></button><button class="cr" aria-label="Еще"><i class="car"></i></button><button class="sq" aria-label="Нормально к"><svg class="ic"><use href="#normal"/></svg></button><button class="sq" aria-label="Ориентация"><svg class="ic"><use href="#orient"/></svg></button><button class="cr" aria-label="Еще"><i class="car"></i></button></div>
      <div><button class="sq on" aria-label="Полутоновое"><svg class="ic"><use href="#box"/></svg></button><button class="sq" aria-label="Каркас"><svg class="ic"><use href="#wire"/></svg></button><button class="cr" aria-label="Еще"><i class="car"></i></button></div>
      <div><button class="sq" aria-label="Скрыть"><svg class="ic"><use href="#eyeoff"/></svg></button><button class="cr" aria-label="Еще"><i class="car"></i></button><button class="sq" aria-label="Показать"><svg class="ic"><use href="#cameye"/></svg></button><button class="cr" aria-label="Еще"><i class="car"></i></button></div>
      <div><button class="sq on" aria-label="Ограничения"><svg class="ic"><use href="#constr"/></svg></button><button class="sq" aria-label="Размеры"><svg class="ic"><use href="#planar"/></svg></button><button class="sq on" aria-label="Обозначения"><svg class="ic"><use href="#shade"/></svg></button><button class="sq" aria-label="Слои"><svg class="ic"><use href="#layers"/></svg></button></div>
      <div><button class="sq on" aria-label="Фильтр"><svg class="ic"><use href="#funnel"/></svg></button><button class="sq on nar" aria-label="Еще"><i class="car lite"></i></button></div>
      <div><button class="sq" aria-label="Измерить"><svg class="ic"><use href="#caliper"/></svg></button><button class="sq" aria-label="Пипетка"><svg class="ic pale"><use href="#pipette"/></svg></button></div>
    </div>
  </section>
</main>

<footer class="taskbar d-flex flex-shrink-0">
  <button class="start" aria-label="Пуск"><svg width="14" height="14" viewBox="0 0 14 14"><path d="M0 2l6-1v5.500H0zM7 .9L14 0v6.500H7zM0 7.500h6V13l-6-1zM7 7.500h7V14l-7-.9z"/></svg></button>
  <label class="find d-flex align-items-center ps-2"><svg class="ic" viewBox="0 0 16 16"><circle cx="10" cy="6" r="4.500"/><path d="M7 9l-5.500 5.500"/></svg><input class="flex-fill ms-2" placeholder="Поиск" aria-label="Поиск">
    <svg width="54" height="24" viewBox="0 0 54 24" class="me-2"><path fill="#f6be22" d="M22 2q2 8 9.500 10Q24 14 22 22q-2-8-9.500-10Q20 10 22 2z" stroke="#f6be22" stroke-width="1.500" stroke-linejoin="round"/><path fill="#f6c63c" d="M41 10q1 4 4.500 5.500Q42 17 41 20.500q-1-4-4.500-5Q40 14 41 10z"/><path fill="#239be0" d="M6 15l1 3 3 1-3 1-1 3-1-3-3-1 3-1z"/><circle cx="35" cy="4" r="2" fill="#e3593b"/><circle cx="51" cy="20" r="1.500" fill="#8cc152"/></svg></label>
  <div class="apps d-flex">
    <button class="app" aria-label="Проводник"><svg width="20" height="18" viewBox="0 0 20 18"><path fill="#d99b20" d="M1 2h7l2 3H1z"/><path fill="#ffd866" d="M1 4h18v11H1z"/><path fill="#3590d4" d="M4 9h12v7h-3v-4H7v4H4z"/></svg></button>
    <button class="app" aria-label="Браузер"><svg width="20" height="20" viewBox="0 0 20 20"><circle cx="10" cy="10" r="10" fill="#fff"/><path fill="none" stroke="#f33d22" stroke-width="3" d="M5 4l5 7v6"/><path stroke="#e0359a" stroke-width="3" d="M10 11l5-7"/></svg></button>
    <button class="app" aria-label="Steam"><svg width="20" height="20" viewBox="0 0 20 20"><circle cx="10" cy="10" r="9.500" fill="#143a66"/><path stroke="#fff" stroke-width="3" d="M1 10l6 3 5-5"/><circle cx="12.500" cy="7.500" r="4" fill="#fff"/><circle cx="12.500" cy="7.500" r="2.200" fill="#143a66" stroke="#fff" stroke-width=".5"/><circle cx="7" cy="13.500" r="2.500" fill="#fff"/></svg></button>
    <button class="app" aria-label="Дракон"><svg width="20" height="20" viewBox="0 0 20 20"><path fill="#8c1720" d="M0 0h20v20H0z"/><path fill="none" stroke="#fff" stroke-width="1.500" d="M0 6Q12-1 19 12"/><path fill="#fff" d="M7 10q4-4 8-1l4 4v2l-4-1-2 1 3 4H5q-3-4 0-5l5 1q-3-3-5-2z"/></svg></button>
    <button class="app" aria-label="Opera"><svg width="20" height="20" viewBox="0 0 20 20" fill="none" stroke="#e84068" stroke-width="1.500"><circle cx="10" cy="10" r="9"/><ellipse cx="10" cy="10" rx="4" ry="7.500"/><path d="M13 3q6 7 0 14"/></svg></button>
    <button class="app" aria-label="Птица"><svg width="20" height="20" viewBox="0 0 20 20"><rect width="20" height="20" rx="4" fill="#cf1e2b"/><path fill="#fff" d="M6 19q2-6 1-9-1-5 3-6 5 0 5 5l-2 3 1 7z"/><path fill="#222" d="M6 6q1-4 6-3l-2 3zM10 15l3 1v3h-3z"/><circle cx="11" cy="8" r="1.200" fill="#222"/><path fill="#888" d="M13 8l3 2-3 2z"/></svg></button>
    <button class="app on" aria-label="КОМПАС"><svg width="20" height="20"><use href="#klogo"/></svg></button>
  </div>
  <div class="systray d-flex align-items-center ms-auto">
    <svg class="ic me-1" viewBox="0 0 16 16"><path stroke-width="1.500" d="M3 10l5-5 5 5"/></svg>
    <svg class="ic" viewBox="0 0 16 16"><path d="M2 6h3l3-3v10l-3-3H2zM10 6q1.500 2 0 4"/><path stroke="#aaa" d="M12 4q3 4 0 8"/></svg>
    <span class="mx-2">РУС</span>
    <span class="clock text-center">21:33<br>06.04.2026</span>
    <svg width="26" height="26" viewBox="0 0 26 26" class="ms-2"><path fill="#222" d="M4 4h13v11H10l-3 3v-3H4z"/><path stroke="#eee" d="M6 7h9M6 9.500h9M6 12h6"/><circle cx="16.500" cy="16.500" r="6.500" fill="#d4d4d4" stroke="#888"/><text x="14" y="20" font-size="10" fill="#222">1</text></svg>
  </div>
</footer>
<script src="https://cdn.jsdelivr.net/npm/bootstrap@5.3.0/dist/js/bootstrap.bundle.min.js"></script>
</body>
</html>
